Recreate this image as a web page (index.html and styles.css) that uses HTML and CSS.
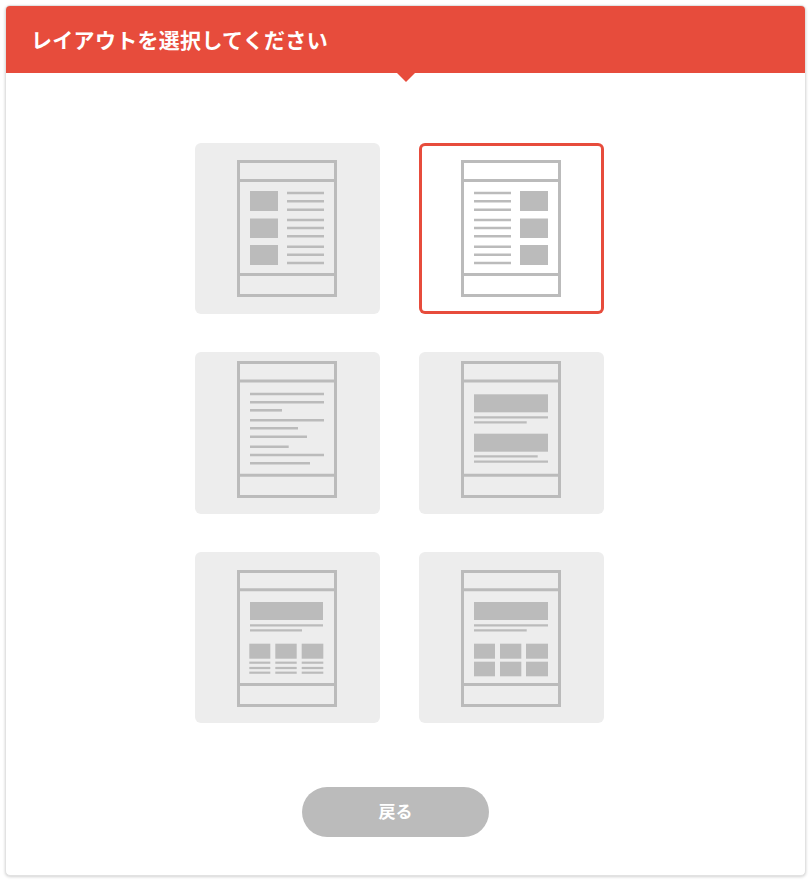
FILE: index.html
```html
<!DOCTYPE html>
<html lang="ja">
<head>
<meta charset="utf-8">
<title>レイアウトを選択してください</title>
<link rel="stylesheet" href="styles.css">
</head>
<body>
<div class="panel">
  <div class="panel-header">
    <h1 class="panel-title">レイアウトを選択してください</h1>
  </div>
  <div class="panel-body">
    <div class="layout-grid">
      <div class="tile tile--r1">
        <svg class="doc" viewBox="0 0 100 137" width="100" height="137">
          <g class="frame"><rect x="1.5" y="1.5" width="97" height="134"/><line x1="0" y1="20.5" x2="100" y2="20.5"/><line x1="0" y1="114.5" x2="100" y2="114.5"/></g>
          <g class="fill"><rect x="13" y="31" width="28" height="20"/><rect x="13" y="58.5" width="28" height="19.5"/><rect x="13" y="85" width="28" height="20"/></g>
          <g class="ln"><line x1="50" y1="33" x2="87" y2="33"/><line x1="50" y1="41.3" x2="87" y2="41.3"/><line x1="50" y1="49.7" x2="87" y2="49.7"/><line x1="50" y1="60" x2="87" y2="60"/><line x1="50" y1="68" x2="87" y2="68"/><line x1="50" y1="76.3" x2="87" y2="76.3"/><line x1="50" y1="86.7" x2="87" y2="86.7"/><line x1="50" y1="94.7" x2="87" y2="94.7"/><line x1="50" y1="103" x2="87" y2="103"/></g>
        </svg>
      </div>
      <div class="tile tile--r1 tile--selected">
        <svg class="doc" viewBox="0 0 100 137" width="100" height="137">
          <g class="frame"><rect x="1.5" y="1.5" width="97" height="134"/><line x1="0" y1="20.5" x2="100" y2="20.5"/><line x1="0" y1="114.5" x2="100" y2="114.5"/></g>
          <g class="fill"><rect x="59" y="31" width="28" height="20"/><rect x="59" y="58.5" width="28" height="19.5"/><rect x="59" y="85" width="28" height="20"/></g>
          <g class="ln"><line x1="13" y1="33" x2="50" y2="33"/><line x1="13" y1="41.3" x2="50" y2="41.3"/><line x1="13" y1="49.7" x2="50" y2="49.7"/><line x1="13" y1="60" x2="50" y2="60"/><line x1="13" y1="68" x2="50" y2="68"/><line x1="13" y1="76.3" x2="50" y2="76.3"/><line x1="13" y1="86.7" x2="50" y2="86.7"/><line x1="13" y1="94.7" x2="50" y2="94.7"/><line x1="13" y1="103" x2="50" y2="103"/></g>
        </svg>
      </div>
      <div class="tile tile--r2">
        <svg class="doc" viewBox="0 0 100 137" width="100" height="137">
          <g class="frame"><rect x="1.5" y="1.5" width="97" height="134"/><line x1="0" y1="20" x2="100" y2="20"/><line x1="0" y1="114.3" x2="100" y2="114.3"/></g>
          <g class="ln"><line x1="13" y1="33" x2="87" y2="33"/><line x1="13" y1="41.3" x2="87" y2="41.3"/><line x1="13" y1="49.3" x2="45" y2="49.3"/><line x1="13" y1="59.3" x2="87" y2="59.3"/><line x1="13" y1="67.3" x2="61" y2="67.3"/><line x1="13" y1="75.7" x2="70" y2="75.7"/><line x1="13" y1="85.7" x2="51.7" y2="85.7"/><line x1="13" y1="94" x2="87" y2="94"/><line x1="13" y1="102.3" x2="73" y2="102.3"/></g>
        </svg>
      </div>
      <div class="tile tile--r2">
        <svg class="doc" viewBox="0 0 100 137" width="100" height="137">
          <g class="frame"><rect x="1.5" y="1.5" width="97" height="134"/><line x1="0" y1="20" x2="100" y2="20"/><line x1="0" y1="114.3" x2="100" y2="114.3"/></g>
          <g class="fill"><rect x="13" y="33.3" width="74" height="18"/><rect x="13" y="72.7" width="74" height="18"/></g>
          <g class="ln thin"><line x1="13" y1="56.3" x2="87" y2="56.3"/><line x1="13" y1="61.3" x2="65.7" y2="61.3"/><line x1="13" y1="95.3" x2="76.7" y2="95.3"/><line x1="13" y1="100.7" x2="87" y2="100.7"/></g>
        </svg>
      </div>
      <div class="tile tile--r3">
        <svg class="doc" viewBox="0 0 100 137" width="100" height="137">
          <g class="frame"><rect x="1.5" y="1.5" width="97" height="134"/><line x1="0" y1="19.7" x2="100" y2="19.7"/><line x1="0" y1="114.5" x2="100" y2="114.5"/></g>
          <g class="fill"><rect x="13" y="32" width="73" height="18"/><rect x="12.3" y="73.7" width="21" height="15"/><rect x="38.3" y="73.7" width="21.4" height="15"/><rect x="64.7" y="73.7" width="21.6" height="15"/></g>
          <g class="ln thin"><line x1="13" y1="55.3" x2="86" y2="55.3"/><line x1="13" y1="60.3" x2="65" y2="60.3"/><line x1="12.3" y1="92.7" x2="33.3" y2="92.7"/><line x1="12.3" y1="98" x2="33.3" y2="98"/><line x1="12.3" y1="102.7" x2="33.3" y2="102.7"/><line x1="38.3" y1="92.7" x2="59.7" y2="92.7"/><line x1="38.3" y1="98" x2="59.7" y2="98"/><line x1="38.3" y1="102.7" x2="59.7" y2="102.7"/><line x1="64.7" y1="92.7" x2="86.3" y2="92.7"/><line x1="64.7" y1="98" x2="86.3" y2="98"/><line x1="64.7" y1="102.7" x2="86.3" y2="102.7"/></g>
        </svg>
      </div>
      <div class="tile tile--r3">
        <svg class="doc" viewBox="0 0 100 137" width="100" height="137">
          <g class="frame"><rect x="1.5" y="1.5" width="97" height="134"/><line x1="0" y1="19.7" x2="100" y2="19.7"/><line x1="0" y1="114.5" x2="100" y2="114.5"/></g>
          <g class="fill"><rect x="13" y="32" width="74" height="18"/><rect x="13" y="73.7" width="21" height="15"/><rect x="39" y="73.7" width="21.3" height="15"/><rect x="65" y="73.7" width="22" height="15"/><rect x="13" y="91.7" width="21" height="14.6"/><rect x="39" y="91.7" width="21.3" height="14.6"/><rect x="65" y="91.7" width="22" height="14.6"/></g>
          <g class="ln thin"><line x1="13" y1="55.3" x2="87" y2="55.3"/><line x1="13" y1="60.3" x2="65.7" y2="60.3"/></g>
        </svg>
      </div>
    </div>
    <button class="back-btn" type="button">戻る</button>
  </div>
</div>
</body>
</html>
```
FILE: styles.css
```css
html, body {
  margin: 0;
  padding: 0;
  background: #ffffff;
}

body {
  font-family: "Noto Sans CJK JP", "Noto Sans", sans-serif;
}

.panel {
  margin: 5px;
  width: 801px;
  height: 871px;
  box-sizing: border-box;
  border: 1px solid #e2e2e2;
  border-radius: 5px;
  box-shadow: 0 1px 3px rgba(0, 0, 0, 0.18);
  background: #ffffff;
}

.panel-header {
  position: relative;
  height: 67px;
  background: #e74c3c;
  border-radius: 4px 4px 0 0;
  display: flex;
  align-items: center;
  padding-left: 25px;
  padding-bottom: 1px;
  box-sizing: border-box;
}

.panel-header::after {
  content: "";
  position: absolute;
  left: 50%;
  bottom: -9px;
  margin-left: -9px;
  width: 0;
  height: 0;
  border-left: 9px solid transparent;
  border-right: 9px solid transparent;
  border-top: 9px solid #e74c3c;
}

.panel-title {
  margin: 0;
  color: #ffffff;
  font-size: 21px;
  font-weight: 700;
  letter-spacing: 0.3px;
}

.panel-body {
  padding-top: 70px;
}

.layout-grid {
  display: grid;
  grid-template-columns: 185px 185px;
  column-gap: 39px;
  row-gap: 38px;
  margin-left: 189px;
}

.tile {
  background: #ededed;
  border-radius: 6px;
  display: flex;
  justify-content: flex-start;
  align-items: flex-start;
  padding: 17px 0 17px 42px;
}

.tile--r2 {
  padding: 9px 0 16px 42px;
}

.tile--r3 {
  padding: 18px 0 16px 42px;
}

.tile--selected {
  background: #ffffff;
  box-shadow: inset 0 0 0 3px #e74c3c;
}

.doc {
  display: block;
}

.doc .frame rect,
.doc .frame line {
  fill: none;
  stroke: #bbbbbb;
  stroke-width: 3;
}

.doc .fill rect {
  fill: #bbbbbb;
}

.doc .ln line {
  stroke: #bbbbbb;
  stroke-width: 2.6;
}

.doc .ln.thin line {
  stroke-width: 2.2;
}

.back-btn {
  display: block;
  margin: 64px 0 0 296px;
  width: 187px;
  height: 50px;
  border: none;
  border-radius: 25px;
  background: #bbbbbb;
  color: #ffffff;
  font-family: "Noto Sans CJK JP", "Noto Sans", sans-serif;
  font-size: 17px;
  font-weight: 700;
  padding: 0 0 3px;
}
```
